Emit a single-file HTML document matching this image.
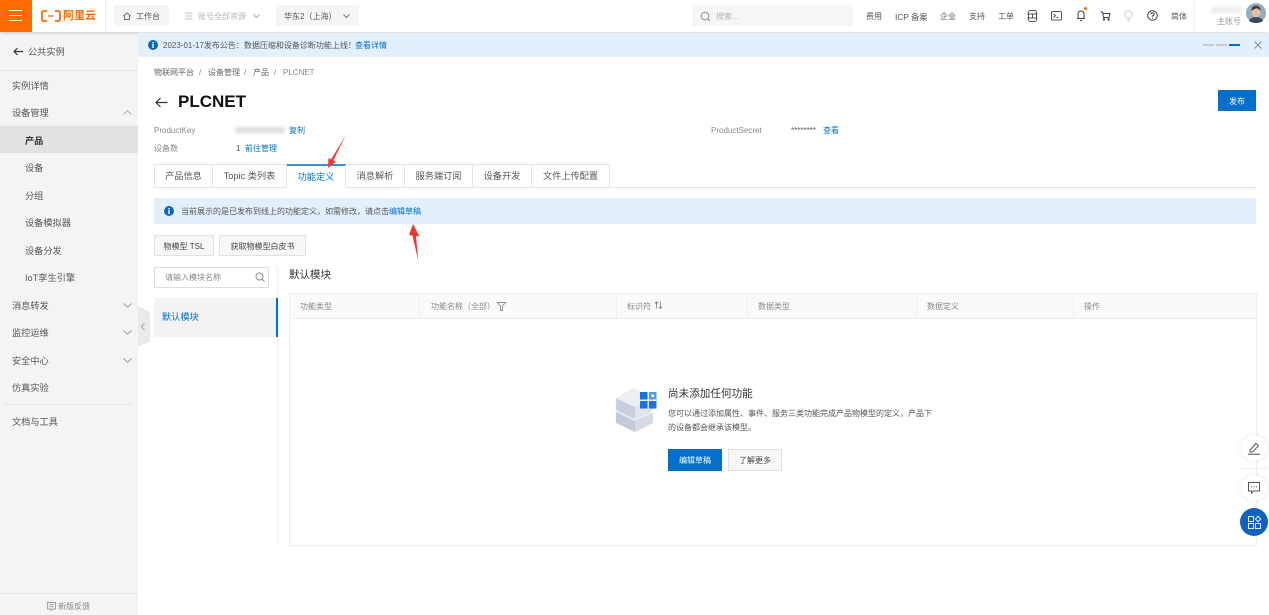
<!DOCTYPE html>
<html lang="zh-CN"><head><meta charset="utf-8"><title>PLCNET</title>
<style>
html,body{margin:0;padding:0}
body{width:1269px;height:615px;overflow:hidden;background:#fff;position:relative;font-family:"Liberation Sans","Noto Sans CJK SC",sans-serif;color:#555;font-size:9px}
.a{position:absolute}
.t{position:absolute;white-space:nowrap;line-height:12px;font-size:8px;color:#555;filter:blur(.35px);margin-top:1px}
.n{margin-top:0}
.l{color:#0070cc}
.g{color:#888}
.s{font-size:9.2px;color:#555;margin-top:0}
.tab{position:absolute;top:164px;height:24px;box-sizing:border-box;border:1px solid #e3e3e3;border-left:none;background:#fff;text-align:center;line-height:23px;font-size:9.2px;color:#555}
.btn{position:absolute;box-sizing:border-box;border:1px solid #e2e2e2;background:#f7f7f7;text-align:center;font-size:8px;color:#444}
.col{position:absolute;top:293px;width:1px;height:25px;background:#eee}
svg{position:absolute;overflow:visible}
</style></head><body>

<!-- sidebar -->
<div class="a" style="left:0;top:32px;width:138px;height:583px;background:#f4f4f4"></div>
<div class="a" style="left:0;top:70px;width:138px;height:1px;background:#e6e6e6"></div>
<div class="a" style="left:0;top:126px;width:138px;height:27px;background:#e2e2e2"></div>
<div class="a" style="left:4px;top:404px;width:128px;height:1px;background:#e3e3e3"></div>
<div class="a" style="left:0;top:593px;width:138px;height:1px;background:#e6e6e6"></div>
<svg style="left:13px;top:47px" width="11" height="9" fill="none" stroke="#333" stroke-width="1.2"><path d="M10 4.5H1M4.5 1L1 4.5 4.5 8"/></svg>
<div class="t s" style="left:28px;top:46px">公共实例</div>
<div class="t s" style="left:12px;top:80px">实例详情</div>
<div class="t s" style="left:12px;top:107px">设备管理</div>
<div class="t s" style="left:25px;top:135px;color:#333;font-weight:bold">产品</div>
<div class="t s" style="left:25px;top:162px">设备</div>
<div class="t s" style="left:25px;top:190px">分组</div>
<div class="t s" style="left:25px;top:217px">设备模拟器</div>
<div class="t s" style="left:25px;top:245px">设备分发</div>
<div class="t s" style="left:25px;top:272px">IoT孪生引擎</div>
<div class="t s" style="left:12px;top:300px">消息转发</div>
<div class="t s" style="left:12px;top:327px">监控运维</div>
<div class="t s" style="left:12px;top:355px">安全中心</div>
<div class="t s" style="left:12px;top:382px">仿真实验</div>
<div class="t s" style="left:12px;top:416px">文档与工具</div>
<svg style="left:123px;top:110px" width="9" height="5" fill="none" stroke="#aaa"><path d="M.5 4.5L4.5 .8 8.5 4.5"/></svg>
<svg style="left:123px;top:303px" width="9" height="5" fill="none" stroke="#999"><path d="M.5 .5L4.5 4.2 8.5 .5"/></svg>
<svg style="left:123px;top:330px" width="9" height="5" fill="none" stroke="#999"><path d="M.5 .5L4.5 4.2 8.5 .5"/></svg>
<svg style="left:123px;top:358px" width="9" height="5" fill="none" stroke="#999"><path d="M.5 .5L4.5 4.2 8.5 .5"/></svg>
<svg style="left:47px;top:602px" width="9" height="9" fill="none" stroke="#999" stroke-width=".9"><path d="M.5 .5H8.5V7H5.5L4.5 8.5 3.5 7H.5ZM2.2 2.7H6.8M2.2 4.7H6.8"/></svg>
<div class="t g" style="left:58px;top:600px">新版反馈</div>
<svg style="left:138px;top:306px" width="12" height="41"><path d="M0 0L12 6V35L0 41Z" fill="#e9e9e9"/><path d="M6.5 17L3.5 20.5 6.5 24" fill="none" stroke="#aaa"/></svg>

<!-- top bar -->
<div class="a" style="left:0;top:0;width:1269px;height:32px;background:#fff;box-shadow:0 1px 3px rgba(0,0,0,.18)"></div>
<div class="a" style="left:0;top:0;width:32px;height:32px;background:#ff6a00"></div>
<div class="a" style="left:9px;top:10px;width:13px;height:1.4px;background:#fff"></div>
<div class="a" style="left:9px;top:15px;width:13px;height:1.4px;background:#fff"></div>
<div class="a" style="left:9px;top:20px;width:13px;height:1.4px;background:#fff"></div>
<svg style="left:41px;top:10px" width="20" height="12" fill="none" stroke="#ff6a00" stroke-width="1.8"><path d="M6 1H3Q1 1 1 3V9Q1 11 3 11H6M14 1H17Q19 1 19 3V9Q19 11 17 11H14"/><path d="M7 6H13" stroke-width="1.2"/></svg>
<div class="t n" style="left:63px;top:9px;font-size:11px;line-height:14px;color:#ff6a00;font-weight:bold">阿里云</div>
<div class="a" style="left:105px;top:0;width:1px;height:32px;background:#eee"></div>
<div class="a" style="left:114px;top:5px;width:55px;height:21px;background:#f5f5f5"></div>
<svg style="left:123px;top:12px" width="8" height="8" fill="none" stroke="#666" stroke-width=".9"><path d="M.5 4L4 .8 7.5 4M1.5 3.5V7.5H6.5V3.5"/></svg>
<div class="t" style="left:136px;top:10px">工作台</div>
<svg style="left:185px;top:12px" width="8" height="8" fill="none" stroke="#bbb"><path d="M.5 1H7.5M.5 4H7.5M.5 7H7.5"/></svg>
<div class="t" style="left:198px;top:10px;color:#b5b5b5">账号全部资源</div>
<svg style="left:253px;top:14px" width="7" height="4" fill="none" stroke="#aaa"><path d="M.5 .5L3.5 3.5 6.5 .5"/></svg>
<div class="a" style="left:276px;top:5px;width:83px;height:21px;background:#f5f5f5"></div>
<div class="t" style="left:284px;top:10px">华东2（上海）</div>
<svg style="left:343px;top:14px" width="7" height="4" fill="none" stroke="#777"><path d="M.5 .5L3.5 3.5 6.5 .5"/></svg>
<div class="a" style="left:692px;top:5px;width:161px;height:21px;background:#f6f6f6"></div>
<svg style="left:700px;top:11px" width="11" height="11" fill="none" stroke="#888"><circle cx="5" cy="5" r="3.8"/><path d="M8 8L10 10"/></svg>
<div class="t" style="left:716px;top:10px;color:#b5b5b5">搜索...</div>
<div class="t" style="left:866px;top:10px">费用</div>
<div class="t" style="left:895px;top:10px;font-size:8.3px">ICP 备案</div>
<div class="t" style="left:940px;top:10px">企业</div>
<div class="t" style="left:969px;top:10px">支持</div>
<div class="t" style="left:998px;top:10px">工单</div>
<svg style="left:1027px;top:10px" width="11" height="12" fill="none" stroke="#555"><rect x="1.5" y=".5" width="8" height="11" rx="2"/><path d="M.5 4H10.5M.5 8H10.5M5.5 4V8"/></svg>
<svg style="left:1051px;top:11px" width="11" height="10" fill="none" stroke="#555"><rect x=".5" y=".5" width="10" height="8.5" rx="1"/><path d="M2.5 3L4.5 4.8 2.5 6.5M5.5 6.5H7.5"/></svg>
<svg style="left:1076px;top:9px" width="10" height="13" fill="none" stroke="#444"><path d="M1 9.5H9M2 9.5V5.5Q2 2 5 2T8 5.5V9.5M4 11.5H6"/></svg>
<div class="a" style="left:1084px;top:7px;width:3px;height:3px;border-radius:50%;background:#ff6a00"></div>
<svg style="left:1100px;top:11px" width="11" height="10" fill="none" stroke="#444"><path d="M.5 1H2.5L3.5 6.5H9L10 2.5H2.8"/><circle cx="4" cy="8.5" r=".7"/><circle cx="8.5" cy="8.5" r=".7"/></svg>
<svg style="left:1124px;top:10px" width="9" height="12" fill="none" stroke="#ccc"><circle cx="4.5" cy="4.5" r="3.8"/><path d="M3 9.5H6M3.5 11.5H5.5"/></svg>
<svg style="left:1147px;top:10px" width="11" height="11" fill="none" stroke="#444"><circle cx="5.5" cy="5.5" r="4.8"/><path d="M3.8 4.3Q3.8 2.8 5.5 2.8T7.2 4.3Q7.2 5.2 5.5 6V6.8M5.5 7.8V8.8"/></svg>
<div class="t" style="left:1171px;top:10px">简体</div>
<div class="a" style="left:1194px;top:0;width:1px;height:32px;background:#eee"></div>
<div class="a" style="left:1211px;top:7px;width:30px;height:6px;background:#ececec;filter:blur(1.5px)"></div>
<div class="t" style="left:1217px;top:15px;color:#999">主账号</div>
<svg style="left:1246px;top:3px" width="20" height="20"><circle cx="10" cy="10" r="10" fill="#8fb0c4"/><ellipse cx="10" cy="9" rx="4.5" ry="5.5" fill="#e3bfa5"/><path d="M5.5 8Q5.5 2.5 10 2.5T14.5 8Q12 5 10 5.5T5.5 8Z" fill="#4a3a32"/><path d="M3 18Q5 14 10 14T17 18Q14 20 10 20T3 18Z" fill="#3c4a58"/></svg>

<!-- notice -->
<div class="a" style="left:138px;top:33px;width:1131px;height:24px;background:#e3f0fc"></div>
<svg style="left:148px;top:40px" width="10" height="10"><circle cx="5" cy="5" r="5" fill="#0a68c4"/><rect x="4.3" y="4" width="1.4" height="4" fill="#fff"/><rect x="4.3" y="2" width="1.4" height="1.4" fill="#fff"/></svg>
<div class="t" style="left:163px;top:39px">2023-01-17发布公告：数据压缩和设备诊断功能上线！</div>
<div class="t l" style="left:355px;top:39px">查看详情</div>
<div class="a" style="left:1203px;top:44px;width:11px;height:2px;background:#c8ccd0"></div>
<div class="a" style="left:1216px;top:44px;width:11px;height:2px;background:#c8ccd0"></div>
<div class="a" style="left:1229px;top:44px;width:11px;height:2px;background:#0070cc"></div>
<svg style="left:1254px;top:41px" width="8" height="8" fill="none" stroke="#888"><path d="M.5 .5L7.5 7.5M7.5 .5L.5 7.5"/></svg>

<!-- breadcrumb and header -->
<div class="t" style="left:154px;top:66px;color:#666">物联网平台</div>
<div class="t" style="left:199px;top:66px;color:#888">/</div>
<div class="t" style="left:208px;top:66px;color:#666">设备管理</div>
<div class="t" style="left:244px;top:66px;color:#888">/</div>
<div class="t" style="left:253px;top:66px;color:#666">产品</div>
<div class="t" style="left:274px;top:66px;color:#888">/</div>
<div class="t" style="left:283px;top:66px;color:#888">PLCNET</div>
<svg style="left:155px;top:97px" width="13" height="11" fill="none" stroke="#333" stroke-width="1.2"><path d="M12.5 5.5H1M5.5 1L1 5.5 5.5 10"/></svg>
<div class="t n" style="left:178px;top:91px;font-size:17px;line-height:22px;font-weight:bold;color:#111">PLCNET</div>
<div class="btn" style="left:1218px;top:90px;width:38px;height:21px;line-height:21px;background:#0070cc;border-color:#0070cc;color:#fff">发布</div>

<div class="t g" style="left:154px;top:124px">ProductKey</div>
<div class="a" style="left:235px;top:127px;width:50px;height:6px;background:#ddd;filter:blur(1.5px)"></div>
<div class="t l" style="left:289px;top:124px">复制</div>
<div class="t g" style="left:154px;top:142px">设备数</div>
<div class="t" style="left:236px;top:142px">1</div>
<div class="t l" style="left:245px;top:142px">前往管理</div>
<div class="t g" style="left:711px;top:124px">ProductSecret</div>
<div class="t" style="left:791px;top:124px">********</div>
<div class="t l" style="left:823px;top:124px">查看</div>

<!-- tabs -->
<div class="a" style="left:154px;top:187px;width:1102px;height:1px;background:#e3e3e3"></div>
<div class="tab" style="left:154px;width:59px;border-left:1px solid #e3e3e3">产品信息</div>
<div class="tab" style="left:213px;width:74px">Topic 类列表</div>
<div class="tab" style="left:287px;width:59px;border-top:2px solid #3d8fd6;border-bottom-color:#fff;color:#0070cc;line-height:22px">功能定义</div>
<div class="tab" style="left:346px;width:59px">消息解析</div>
<div class="tab" style="left:405px;width:68px">服务端订阅</div>
<div class="tab" style="left:473px;width:59px">设备开发</div>
<div class="tab" style="left:532px;width:78px">文件上传配置</div>

<!-- info -->
<div class="a" style="left:154px;top:198px;width:1102px;height:26px;background:#e3f0fc"></div>
<svg style="left:164px;top:206px" width="10" height="10"><circle cx="5" cy="5" r="5" fill="#0a68c4"/><rect x="4.3" y="4" width="1.4" height="4" fill="#fff"/><rect x="4.3" y="2" width="1.4" height="1.4" fill="#fff"/></svg>
<div class="t" style="left:181px;top:205px">当前展示的是已发布到线上的功能定义，如需修改，请点击</div>
<div class="t l" style="left:389px;top:205px">编辑草稿</div>

<!-- buttons -->
<div class="btn" style="left:154px;top:235px;width:60px;height:21px;line-height:21px">物模型 TSL</div>
<div class="btn" style="left:219px;top:235px;width:87px;height:21px;line-height:21px">获取物模型白皮书</div>

<!-- module list -->
<div class="a" style="left:154px;top:267px;width:115px;height:21px;box-sizing:border-box;border:1px solid #ddd"></div>
<div class="t g" style="left:165px;top:271px">请输入模块名称</div>
<svg style="left:255px;top:272px" width="10" height="10" fill="none" stroke="#888"><circle cx="4.5" cy="4.5" r="3.5"/><path d="M7 7L9.5 9.5"/></svg>
<div class="a" style="left:277px;top:267px;width:1px;height:278px;background:#eee"></div>
<div class="a" style="left:154px;top:298px;width:122px;height:39px;background:#f3f3f3"></div>
<div class="a" style="left:276px;top:298px;width:2px;height:39px;background:#0070cc"></div>
<div class="t l n" style="left:162px;top:311px;font-size:9.2px">默认模块</div>

<!-- table -->
<div class="t n" style="left:289px;top:269px;font-size:10.5px;color:#333">默认模块</div>
<div class="a" style="left:289px;top:293px;width:968px;height:253px;box-sizing:border-box;border:1px solid #eee"></div>
<div class="a" style="left:290px;top:294px;width:966px;height:24px;background:#fafafa;border-bottom:1px solid #eee"></div>
<div class="col" style="left:419px"></div>
<div class="col" style="left:616px"></div>
<div class="col" style="left:747px"></div>
<div class="col" style="left:916px"></div>
<div class="col" style="left:1073px"></div>
<div class="t g" style="left:300px;top:300px">功能类型</div>
<div class="t g" style="left:431px;top:300px">功能名称（全部）</div>
<svg style="left:497px;top:302px" width="9" height="9" fill="none" stroke="#888" stroke-width=".9"><path d="M.5 .5H8.5L5.5 4V8.5H3.5V4Z"/></svg>
<div class="t g" style="left:627px;top:300px">标识符</div>
<svg style="left:654px;top:301px" width="9" height="8" fill="none" stroke="#888" stroke-width=".9"><path d="M2.5 7.5V.8M.8 2.5L2.5 .8 4.2 2.5M6.5 .8V7.5M4.8 5.8L6.5 7.5 8.2 5.8"/></svg>
<div class="t g" style="left:758px;top:300px">数据类型</div>
<div class="t g" style="left:927px;top:300px">数据定义</div>
<div class="t g" style="left:1084px;top:300px">操作</div>

<!-- empty state -->
<svg style="left:616px;top:387px" width="41" height="45">
<path d="M0 25L19 34V45L0 36Z" fill="#c4cad8"/>
<path d="M19 34L37 26V36L19 45Z" fill="#d5dae5"/>
<path d="M0 25L18 17 37 26 19 34Z" fill="#e6e9f0"/>
<path d="M0 11L19 20V32L0 23Z" fill="#c9cfdf"/>
<path d="M19 20L37 11V23L19 32Z" fill="#dfe3ec"/>
<path d="M0 11L17 1 37 11 19 20Z" fill="#eceef4"/>
<rect x="24" y="5" width="7.5" height="7.5" fill="#1a73e0"/>
<rect x="33" y="5" width="7.5" height="7.5" fill="#5a9cec"/>
<rect x="35.5" y="7.5" width="2.5" height="2.5" fill="#fff"/>
<rect x="24" y="14" width="7.5" height="7.5" fill="#1a73e0"/>
<rect x="33" y="14" width="7.5" height="7.5" fill="#1a73e0"/>
</svg>
<div class="t n" style="left:668px;top:388px;font-size:10.6px;color:#333">尚未添加任何功能</div>
<div class="t" style="left:668px;top:407px">您可以通过添加属性、事件、服务三类功能完成产品物模型的定义，产品下</div>
<div class="t" style="left:668px;top:421px">的设备都会继承该模型。</div>
<div class="btn" style="left:668px;top:449px;width:54px;height:22px;line-height:22px;background:#0070cc;border-color:#0070cc;color:#fff">编辑草稿</div>
<div class="btn" style="left:728px;top:449px;width:54px;height:22px;line-height:22px">了解更多</div>

<!-- floating buttons -->
<div class="a" style="left:1241px;top:468px;width:26px;height:1px;background:#eee"></div>
<div class="a" style="left:1241px;top:435px;width:26px;height:26px;border-radius:50%;background:#fff;box-shadow:0 0 4px rgba(0,0,0,.1)"></div>
<svg style="left:1247px;top:441px" width="14" height="14" fill="none" stroke="#555"><path d="M3 9L9 2.5 11.5 4.8 5.5 11H3ZM1 13.2H13"/></svg>
<div class="a" style="left:1241px;top:475px;width:26px;height:26px;border-radius:50%;background:#fff;box-shadow:0 0 4px rgba(0,0,0,.1)"></div>
<svg style="left:1248px;top:482px" width="12" height="12" fill="none" stroke="#555"><path d="M.5 .5H11.5V9H5.5L3.5 11V9H.5Z"/><path d="M3 4.7H4M5.5 4.7H6.5M8 4.7H9"/></svg>
<div class="a" style="left:1240px;top:508px;width:28px;height:28px;border-radius:50%;background:#0f62c0"></div>
<svg style="left:1248px;top:516px" width="13" height="13" fill="none" stroke="#fff" stroke-width=".9"><rect x=".5" y=".5" width="5" height="5"/><rect x=".5" y="7.5" width="5" height="5"/><rect x="7.5" y="7.5" width="5" height="5"/><path d="M10 .3L12.7 3 10 5.7 7.3 3Z"/></svg>

<!-- red arrows -->
<svg style="left:0;top:0" width="1269" height="615"><path d="M346 135L333.5 160 335.5 162 328 168 328.5 158 331 159.5Z" fill="#f0352c"/><path d="M418.3 261L416 236 419.5 236.5 413 224 409 235 412.5 235.5Z" fill="#f0352c"/></svg>

</body></html>
